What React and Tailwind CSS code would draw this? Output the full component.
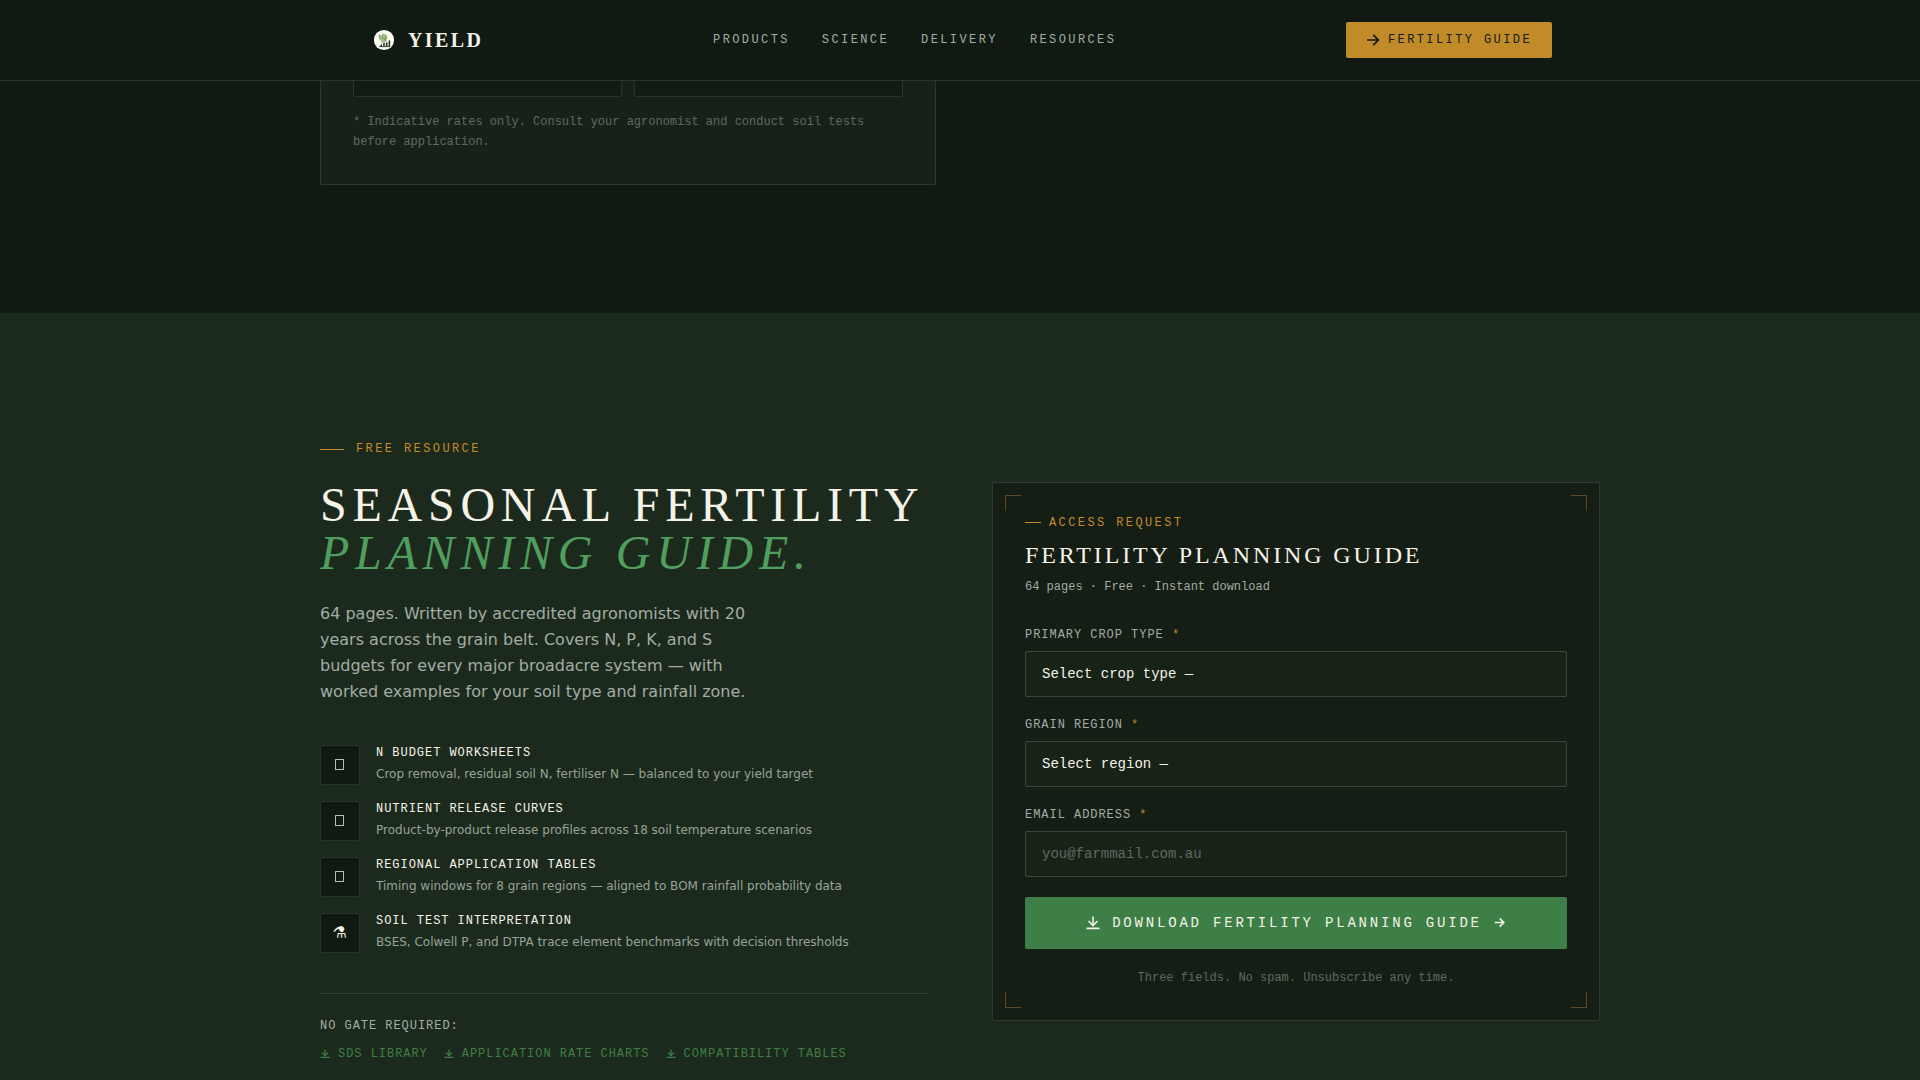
const navLinks = ['PRODUCTS', 'SCIENCE', 'DELIVERY', 'RESOURCES'];

const features = [
  {
    icon: null,
    title: 'N BUDGET WORKSHEETS',
    text: 'Crop removal, residual soil N, fertiliser N — balanced to your yield target',
  },
  {
    icon: null,
    title: 'NUTRIENT RELEASE CURVES',
    text: 'Product-by-product release profiles across 18 soil temperature scenarios',
  },
  {
    icon: null,
    title: 'REGIONAL APPLICATION TABLES',
    text: 'Timing windows for 8 grain regions — aligned to BOM rainfall probability data',
  },
  {
    icon: '⚗',
    title: 'SOIL TEST INTERPRETATION',
    text: 'BSES, Colwell P, and DTPA trace element benchmarks with decision thresholds',
  },
];

const openLinks = ['SDS LIBRARY', 'APPLICATION RATE CHARTS', 'COMPATIBILITY TABLES'];

function Logo() {
  return (
    <svg className="h-8 w-8" viewBox="0 0 32 32">
      <circle cx="16" cy="16" r="10.1" fill="#fbfbf4" />
      <path d="M11 10.5l3 1 1-1.5h3l1.5 3-1 4-2.5 2h-2l-2.5-4z" fill="#a5c48c" />
      <path d="M11 10.5l1 5M15 10l-1 4 3 1M17.5 12v5" stroke="#6f9455" strokeWidth="0.8" fill="none" />
      <path d="M13.3 22.5v-2M16 22.5v-3.5M18.7 22.5v-4M21.4 22.5v-6" stroke="#20261f" strokeWidth="1.5" />
      <path d="M11 22.6h11.2" stroke="#20261f" strokeWidth="0.8" />
    </svg>
  );
}

function ArrowIcon({ className }) {
  return (
    <svg className={className} viewBox="0 0 14 14" fill="none" stroke="currentColor">
      <path d="M1 7h11.2M7.2 1.8L12.4 7l-5.2 5.2" />
    </svg>
  );
}

function DownloadIcon({ className }) {
  return (
    <svg className={className} viewBox="0 0 16 16" fill="none" stroke="currentColor" strokeWidth="1.6">
      <path d="M9 1.5v8.7M4.5 6L9 10.5 13.5 6M2.5 13.4h13" />
    </svg>
  );
}

function SmallDownloadIcon() {
  return (
    <svg className="h-3 w-3" viewBox="0 0 12 12" fill="none" stroke="currentColor" strokeWidth="1.3">
      <path d="M5 1.8v5.4M2 4.6l3 3 3-3M0.4 9.3h9.2" />
    </svg>
  );
}

function Header() {
  return (
    <header className="h-[81px] border-b border-[#28332a] bg-[#111a12]">
      <div className="mx-auto flex h-20 max-w-[1280px] items-center justify-between px-12">
        <a className="flex items-center gap-2">
          <Logo />
          <span className='font-["Liberation_Serif",serif] text-xl font-bold tracking-[0.12em] text-[#f5f2e8]'>
            YIELD
          </span>
        </a>
        <nav className="flex gap-8">
          {navLinks.map((link) => (
            <a key={link} className="text-xs tracking-[0.2em] text-[#a3aca3]">
              {link}
            </a>
          ))}
        </nav>
        <a className="flex h-9 items-center gap-2 rounded-[2px] bg-[#c28b2a] px-5 text-xs tracking-[0.2em] text-[#111a12]">
          <ArrowIcon className="h-[14px] w-[14px] stroke-[1.7]" />
          FERTILITY GUIDE
        </a>
      </div>
    </header>
  );
}

function RatesCard() {
  return (
    <section className="h-[232px] bg-[#111a12]">
      <div className="mx-auto max-w-[1280px]">
        <div className="h-[104px] w-[616px] rounded-b-[2px] border border-t-0 border-[#2d392f] bg-[#182119] px-8">
          <div className="grid h-4 grid-cols-2 gap-3">
            <div className="rounded-b-[2px] border border-t-0 border-[#28332a] bg-[#121b13]" />
            <div className="rounded-b-[2px] border border-t-0 border-[#28332a] bg-[#121b13]" />
          </div>
          <p className="mt-4 text-xs leading-relaxed text-[#5f6960]">
            * Indicative rates only. Consult your agronomist and conduct soil tests before application.
          </p>
        </div>
      </div>
    </section>
  );
}

function Intro() {
  return (
    <div>
      <div className="flex items-center gap-3 text-xs tracking-[0.2em] text-[#c28b2a]">
        <span className="h-px w-6 bg-[#c28b2a]" />
        FREE RESOURCE
      </div>
      <h2 className='mt-6 whitespace-nowrap font-["Liberation_Serif",serif] text-5xl leading-none tracking-[0.12em] text-[#f5f2e8]'>
        SEASONAL FERTILITY
        <br />
        <em className="text-[#509e5e]">PLANNING GUIDE.</em>
      </h2>
      <p className='mt-6 max-w-md font-["DejaVu_Sans",sans-serif] text-base leading-relaxed text-[#a3aca3]'>
        64 pages. Written by accredited agronomists with 20 years across the grain belt. Covers N, P, K, and S
        budgets for every major broadacre system — with worked examples for your soil type and rainfall zone.
      </p>
      <ul className="mt-10 flex flex-col gap-4">
        {features.map((f) => (
          <li key={f.title} className="flex h-10 gap-4">
            <span className='flex h-10 w-10 items-center justify-center rounded-[2px] border border-[#28332a] bg-[#111a12] font-["DejaVu_Sans",sans-serif] text-base text-[#f5f2e8]'>
              {f.icon || <span className="mr-px mb-px h-[11px] w-[9px] border border-[#b9bcb2]" />}
            </span>
            <div>
              <p className="text-xs tracking-[0.08em] text-[#f5f2e8]">{f.title}</p>
              <p className='mt-1 font-["DejaVu_Sans",sans-serif] text-xs leading-relaxed text-[#98a298]'>{f.text}</p>
            </div>
          </li>
        ))}
      </ul>
      <div className="mt-10 border-t border-[#344337] pt-6 text-xs tracking-[0.08em]">
        <p className="text-[#a3aca3]">NO GATE REQUIRED:</p>
        <div className="mt-3 flex gap-4 text-[#3d7f46]">
          {openLinks.map((link) => (
            <a key={link} className="flex items-center gap-1.5">
              <SmallDownloadIcon />
              {link}
            </a>
          ))}
        </div>
      </div>
    </div>
  );
}

function Field({ label, children }) {
  return (
    <label className="block">
      <span className="block text-xs tracking-[0.08em] text-[#a3aca3]">
        {label} <span className="text-[#c28b2a]">*</span>
      </span>
      {children}
    </label>
  );
}

function RequestForm() {
  const control =
    'mt-2 block h-[46px] w-full appearance-none rounded-[2px] border border-[#3a483c] bg-[#182318] px-4 text-sm text-[#f5f2e8] placeholder:text-[#5f6960]';

  return (
    <div className="relative rounded-[2px] border border-[#2d3b30] bg-[#151e15] p-8">
      <span className="absolute top-3 left-3 h-4 w-4 border-t border-l border-[#584b1e]" />
      <span className="absolute top-3 right-3 h-4 w-4 border-t border-r border-[#584b1e]" />
      <span className="absolute bottom-3 left-3 h-4 w-4 border-b border-l border-[#584b1e]" />
      <span className="absolute right-3 bottom-3 h-4 w-4 border-r border-b border-[#584b1e]" />

      <div className="flex items-center gap-2 text-xs tracking-[0.2em] text-[#c28b2a]">
        <span className="h-px w-4 bg-[#c28b2a]" />
        ACCESS REQUEST
      </div>
      <h3 className='mt-2 font-["Liberation_Serif",serif] text-2xl tracking-[0.12em] text-[#f5f2e8]'>
        FERTILITY PLANNING GUIDE
      </h3>
      <p className="mt-2 text-xs text-[#a3aca3]">64 pages · Free · Instant download</p>

      <form className="mt-8 flex flex-col gap-5">
        <Field label="PRIMARY CROP TYPE">
          <select className={control}>
            <option>Select crop type —</option>
          </select>
        </Field>
        <Field label="GRAIN REGION">
          <select className={control}>
            <option>Select region —</option>
          </select>
        </Field>
        <Field label="EMAIL ADDRESS">
          <input type="email" placeholder="you@farmmail.com.au" className={control} />
        </Field>
        <button
          type="button"
          className="flex h-[52px] items-center justify-center gap-3 rounded-[2px] bg-[#3d7f46] text-sm tracking-[0.2em] text-[#f5f2e8]"
        >
          <DownloadIcon className="h-4 w-4" />
          DOWNLOAD FERTILITY PLANNING GUIDE
          <span className="flex w-[14px] pl-[0.5px]">
            <ArrowIcon className="h-[11px] w-[11px] stroke-[2.1]" />
          </span>
        </button>
        <p className="text-center text-xs leading-relaxed text-[#5f6960]">
          Three fields. No spam. Unsubscribe any time.
        </p>
      </form>
    </div>
  );
}

export default function App() {
  return (
    <div className='h-screen overflow-hidden bg-[#1c2a1d] font-["Liberation_Mono",monospace]'>
      <Header />
      <RatesCard />
      <section className="py-32">
        <div className="mx-auto grid max-w-[1280px] grid-cols-2 items-center gap-16">
          <Intro />
          <RequestForm />
        </div>
      </section>
    </div>
  );
}
